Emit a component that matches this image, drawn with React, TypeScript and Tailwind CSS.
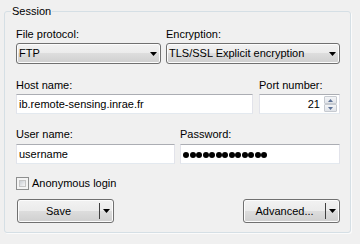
const font = { fontFamily: '"Liberation Sans", Arial, sans-serif' };

function Arrow({ className = "" }: { className?: string }) {
  return (
    <svg width="7" height="4" viewBox="0 0 7 4" className={className}>
      <path d="M0 0h7L3.5 4z" fill="#000" />
    </svg>
  );
}

function Combo({ value, width }: { value: string; width: string }) {
  return (
    <div
      className={`${width} h-[21px] mt-[2px] flex items-center justify-between rounded-[3px] border border-[#707070] bg-[linear-gradient(#f2f2f2,#ebebeb_50%,#dddddd_50%,#cfcfcf)] shadow-[inset_0_0_0_1px_#fcfcfc] pl-[2px] pr-[3px]`}
    >
      <span className="leading-[13px] text-black">{value}</span>
      <Arrow />
    </div>
  );
}

function Field({ children, width, className = "" }: { children?: React.ReactNode; width: string; className?: string }) {
  return (
    <div
      className={`${width} h-[20px] flex items-center border border-[#e2e3ea] border-t-[#abadb3] border-b-[#e3e9ef] bg-white pl-[2px] pt-[1px] ${className}`}
    >
      {children}
    </div>
  );
}

function Label({ children }: { children: React.ReactNode }) {
  return <div className="h-[13px] leading-[13px] text-black">{children}</div>;
}

function SplitButton({ label, width }: { label: string; width: string }) {
  return (
    <div
      className={`${width} h-[24px] flex items-center rounded-[3px] border border-[#707070] bg-[linear-gradient(#f2f2f2,#ebebeb_50%,#dddddd_50%,#cfcfcf)] shadow-[inset_0_0_0_1px_#fcfcfc]`}
    >
      <span className="flex-1 text-center leading-[13px] text-black">{label}</span>
      <div className="w-px h-[16px] bg-[#404040]" />
      <div className="w-[13px] flex justify-center">
        <Arrow />
      </div>
    </div>
  );
}

function Spin({ up }: { up?: boolean }) {
  return (
    <div className="w-[13px] h-[8px] flex items-center justify-center border border-[#c6cad0] rounded-[1px] bg-[linear-gradient(#f4f5f7,#e0e3e8)]">
      <svg width="5" height="3" viewBox="0 0 5 3">
        <path d={up ? "M0 3h5L2.5 0z" : "M0 0h5L2.5 3z"} fill="#5c7196" />
      </svg>
    </div>
  );
}

export default function App() {
  return (
    <div className="w-[360px] h-[244px] bg-[#f0f0f0] pl-[4px] pt-[5px] text-[11px]" style={font}>
      <fieldset className="w-[347px] h-[228px] rounded-[3px] border border-[#d5dfe5] shadow-[1px_1px_0_#fbfbfb] pl-[11px] pr-[10px]">
        <legend className="ml-[-5px] px-[1px] h-[13px] leading-[13px] text-black">Session</legend>
        <div className="flex flex-col pt-[10px]">
          <div className="flex gap-[5px]">
            <div className="w-[145px]">
              <Label>File protocol:</Label>
              <Combo value="FTP" width="w-[145px]" />
            </div>
            <div className="w-[174px]">
              <Label>Encryption:</Label>
              <Combo value="TLS/SSL Explicit encryption" width="w-[174px]" />
            </div>
          </div>

          <div className="flex gap-[6px] mt-[15px]">
            <div className="w-[237px] flex flex-col gap-[2px]">
              <Label>Host name:</Label>
              <Field width="w-[237px]">
                <span className="leading-[13px]">ib.remote-sensing.inrae.fr</span>
              </Field>
            </div>
            <div className="w-[81px] flex flex-col gap-[2px]">
              <Label>Port number:</Label>
              <Field width="w-[81px]" className="justify-end pr-[2px] !pt-0">
                <span className="leading-[13px] mr-[4px] mt-[1px]">21</span>
                <div className="flex flex-col">
                  <Spin up />
                  <Spin />
                </div>
              </Field>
            </div>
          </div>

          <div className="flex gap-[5px] mt-[14px]">
            <div className="w-[159px] flex flex-col gap-[3px]">
              <Label>User name:</Label>
              <Field width="w-[159px]">
                <span className="leading-[13px]">username</span>
              </Field>
            </div>
            <div className="w-[160px] flex flex-col gap-[3px]">
              <Label>Password:</Label>
              <Field width="w-[160px]" className="gap-[0.5px] pl-[2px]">
                {Array.from({ length: 13 }).map((_, i) => (
                  <span key={i} className="w-[6px] h-[6px] rounded-full bg-black" />
                ))}
              </Field>
            </div>
          </div>

          <div className="flex items-center gap-[3px] mt-[13px] h-[13px]">
            <div className="w-[13px] h-[13px] border border-[#8e8f8f] bg-[#f4f4f4] p-[2px]">
              <div className="w-full h-full border border-[#c5c5c5] bg-[linear-gradient(135deg,#cbcfd5,#f6f6f6)]" />
            </div>
            <span className="leading-[13px] text-black">Anonymous login</span>
          </div>

          <div className="flex justify-between w-[324px] mt-[9px] pl-[1px]">
            <SplitButton label="Save" width="w-[97px]" />
            <SplitButton label="Advanced..." width="w-[97px]" />
          </div>
        </div>
      </fieldset>
    </div>
  );
}
